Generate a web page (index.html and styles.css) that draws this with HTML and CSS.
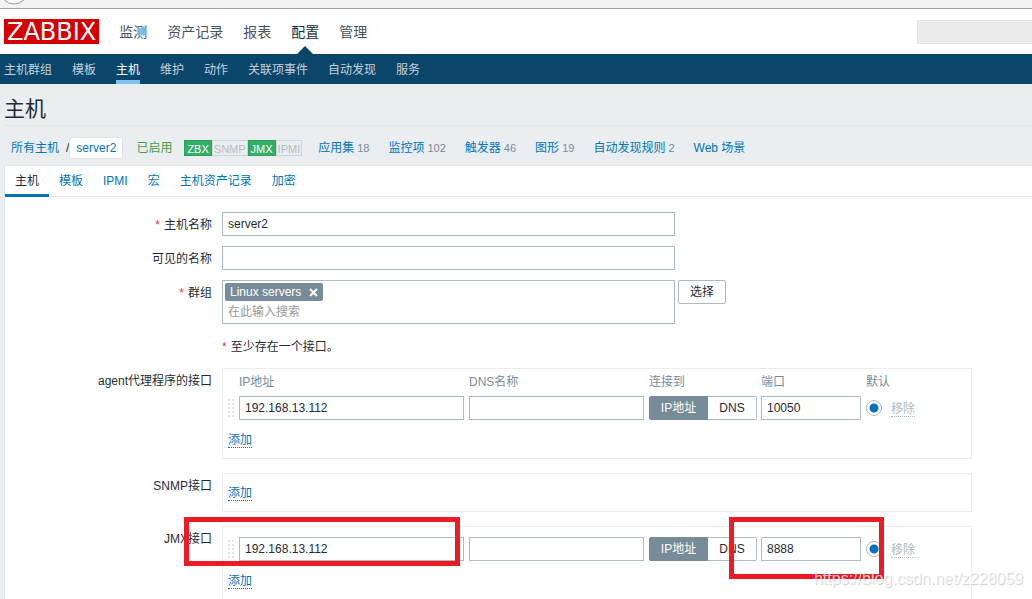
FILE: index.html
```html
<!DOCTYPE html>
<html lang="zh-CN">
<head>
<meta charset="utf-8">
<title>主机</title>
<link rel="stylesheet" href="styles.css">
</head>
<body>
<div class="browser-strip">
  <svg class="browser-back" width="30" height="5" viewBox="0 0 30 5" aria-hidden="true"><circle cx="14" cy="-10" r="14" fill="#fbfbfb" stroke="#999" stroke-width="1"/></svg>
</div>
<header class="header">
  <a class="logo" href="#">ZABBIX</a>
  <nav class="menu">
    <a href="#">监测</a>
    <a href="#">资产记录</a>
    <a href="#">报表</a>
    <a class="current" href="#">配置</a>
    <a href="#">管理</a>
  </nav>
  <input class="search" type="text" aria-label="搜索">
</header>
<nav class="submenu">
  <a href="#">主机群组</a>
  <a href="#">模板</a>
  <a class="current" href="#">主机</a>
  <a href="#">维护</a>
  <a href="#">动作</a>
  <a href="#">关联项事件</a>
  <a href="#">自动发现</a>
  <a href="#">服务</a>
</nav>
<main class="main">
  <h1 class="title">主机</h1>
  <div class="crumbs">
    <a href="#">所有主机</a>
    <span class="slash">/</span>
    <a class="host" href="#">server2</a>
    <span class="enabled">已启用</span>
    <span class="status"><span class="on">ZBX</span><span>SNMP</span><span class="on">JMX</span><span>IPMI</span></span>
    <span class="links">
      <span><a href="#">应用集</a><sub>18</sub></span>
      <span><a href="#">监控项</a><sub>102</sub></span>
      <span><a href="#">触发器</a><sub>46</sub></span>
      <span><a href="#">图形</a><sub>19</sub></span>
      <span><a href="#">自动发现规则</a><sub>2</sub></span>
      <a href="#">Web 场景</a>
    </span>
  </div>
  <section class="panel">
    <nav class="tabs">
      <a class="current" href="#">主机</a>
      <a href="#">模板</a>
      <a href="#">IPMI</a>
      <a href="#">宏</a>
      <a href="#">主机资产记录</a>
      <a href="#">加密</a>
    </nav>
    <form class="form">
      <div class="row">
        <label class="label required" for="host">主机名称</label>
        <input class="text wide" id="host" type="text" value="server2">
      </div>
      <div class="row">
        <label class="label" for="visible">可见的名称</label>
        <input class="text wide" id="visible" type="text">
      </div>
      <div class="row">
        <label class="label required" for="groups">群组</label>
        <div class="groups">
          <div class="multiselect wide">
            <span class="tag">Linux servers<button type="button" aria-label="删除"><svg width="9" height="9" viewBox="0 0 9 9"><path d="M1 1l7 7M8 1l-7 7" stroke="#fff" stroke-width="2"/></svg></button></span>
            <input id="groups" type="text" placeholder="在此输入搜索">
          </div>
          <button class="select" type="button">选择</button>
        </div>
      </div>
      <div class="row">
        <span></span>
        <span class="note required">至少存在一个接口。</span>
      </div>
      <div class="row">
        <span class="label">agent代理程序的接口</span>
        <div class="box">
          <table class="ifaces">
            <thead>
              <tr><th class="c-drag"></th><th class="c-ip">IP地址</th><th class="c-dns">DNS名称</th><th class="c-conn">连接到</th><th class="c-port">端口</th><th class="c-def">默认</th><th></th></tr>
            </thead>
            <tbody>
              <tr>
                <td><span class="drag"></span></td>
                <td><input class="text" type="text" aria-label="IP地址" value="192.168.13.112"></td>
                <td><input class="text" type="text" aria-label="DNS名称"></td>
                <td><span class="segment"><label><input type="radio" name="a-conn" checked><span class="first">IP地址</span></label><label><input type="radio" name="a-conn"><span class="second">DNS</span></label></span></td>
                <td><input class="text" type="text" aria-label="端口" value="10050"></td>
                <td><input class="radio" type="radio" name="a-def" aria-label="默认" checked></td>
                <td><button class="link off" type="button" disabled>移除</button></td>
              </tr>
            </tbody>
          </table>
          <div class="add"><button class="link" type="button">添加</button></div>
        </div>
      </div>
      <div class="row">
        <span class="label">SNMP接口</span>
        <div class="box">
          <div class="add"><button class="link" type="button">添加</button></div>
        </div>
      </div>
      <div class="row last">
        <span class="label">JMX接口</span>
        <div class="box">
          <table class="ifaces">
            <tbody>
              <tr>
                <td class="c-drag"><span class="drag"></span></td>
                <td class="c-ip"><input class="text" type="text" aria-label="IP地址" value="192.168.13.112"></td>
                <td class="c-dns"><input class="text" type="text" aria-label="DNS名称"></td>
                <td class="c-conn"><span class="segment"><label><input type="radio" name="j-conn" checked><span class="first">IP地址</span></label><label><input type="radio" name="j-conn"><span class="second">DNS</span></label></span></td>
                <td class="c-port"><input class="text" type="text" aria-label="端口" value="8888"></td>
                <td class="c-def"><input class="radio" type="radio" name="j-def" aria-label="默认" checked></td>
                <td><button class="link off" type="button" disabled>移除</button></td>
              </tr>
            </tbody>
          </table>
          <div class="add"><button class="link" type="button">添加</button></div>
          <span class="mark mark-ip"></span>
          <span class="mark mark-port"></span>
        </div>
      </div>
    </form>
  </section>
</main>
<div class="watermark">https://blog.csdn.net/z228059</div>
</body>
</html>
```
FILE: styles.css
```css
* {
  box-sizing: border-box;
}

body {
  margin: 0;
  min-height: 100vh;
  display: flex;
  flex-direction: column;
  position: relative;
  background: #ebeef0;
  color: #1f2c33;
  font: 12px/18px "Liberation Sans", "Noto Sans CJK SC", sans-serif;
}

a {
  color: #0275b8;
  text-decoration: none;
}

input,
button {
  font: inherit;
  color: inherit;
}

.browser-strip {
  height: 9px;
  background: #f3f3f3;
  border-bottom: 1px solid #a0a0a0;
}

.browser-back {
  display: block;
}

.header {
  display: flex;
  align-items: center;
  height: 45px;
  padding-left: 4px;
  background: #fff;
}

.logo {
  height: 25px;
  padding: 0 3px;
  background: #d40000;
  color: #fff;
  font: 24px/27px "DejaVu Sans", sans-serif;
}

.menu {
  display: flex;
  align-self: stretch;
  gap: 20px;
  margin-left: 20px;
  font-size: 14px;
  line-height: 47px;
}

.menu a {
  position: relative;
  height: 45px;
  color: #48545b;
}

.menu .current {
  color: #1f2c33;
}

.menu .current::after {
  content: "";
  position: absolute;
  left: 50%;
  bottom: 0;
  margin-left: -8px;
  border: 8px solid transparent;
  border-top: 0;
  border-bottom-color: #0a466a;
}

.search {
  width: 115px;
  height: 24px;
  margin-left: auto;
  background: #ececec;
  border: 1px solid #e3e3e3;
  border-right: 0;
}

.submenu {
  display: flex;
  gap: 20px;
  padding: 0 4px;
  height: 30px;
  background: #0a466a;
  line-height: 32px;
}

.submenu a {
  height: 30px;
  color: #c3d2dc;
}

.submenu .current {
  color: #fff;
  border-bottom: 4px solid #7fc3ee;
}

.main {
  flex: 1;
  display: flex;
  flex-direction: column;
  padding-left: 4px;
}

.title {
  margin: 0;
  padding: 9px 0 0;
  border-bottom: 1px solid #dfe4e7;
  font-size: 21px;
  line-height: 32px;
  font-weight: 400;
}

.crumbs {
  display: flex;
  align-items: center;
  padding: 11px 7px 6px;
  white-space: nowrap;
}

.slash {
  margin-left: 7px;
}

.host {
  padding: 0 6px;
  border: 1px solid #dfe4e7;
  border-radius: 2px;
  background: #fff;
  line-height: 20px;
}

.enabled {
  margin-left: 13px;
  color: #429e47;
}

.status {
  display: flex;
  margin-left: 12px;
  font-size: 11px;
}

.status span {
  padding: 0 1px;
  border: 1px solid #ced4d7;
  color: #b4bcc0;
  line-height: 16px;
  height: 16px;
}

.status .on {
  padding: 0 2px;
  border-color: #2f9f5e;
  background: #34af67;
  color: #fff;
}

.links {
  display: flex;
  gap: 19px;
  margin-left: 16px;
}

.links sub {
  margin-left: 3px;
  color: #768d99;
  font-size: 11px;
  vertical-align: baseline;
}

.panel {
  flex: 1;
  display: flex;
  flex-direction: column;
  background: #fff;
  border: 1px solid #dfe4e7;
  border-width: 1px 0 0 1px;
}

.tabs {
  display: flex;
  height: 31px;
  border-bottom: 1px solid #ebeef0;
  line-height: 31px;
}

.tabs a {
  padding: 0 10px;
  height: 31px;
}

.tabs .current {
  color: #1f2c33;
  border-bottom: 3px solid #0275b8;
}

.form {
  flex: 1;
  display: flex;
  flex-direction: column;
  gap: 10px;
  padding-top: 15px;
}

.row {
  display: grid;
  grid-template-columns: 207px minmax(0, 1fr);
  column-gap: 10px;
}

.last {
  flex: 1;
}

.label {
  text-align: right;
}

.label,
.note {
  height: 24px;
  line-height: 26px;
}

.required::before {
  content: "*";
  margin-right: 4px;
  color: #e33734;
}

.text {
  display: block;
  width: 100%;
  height: 24px;
  padding: 0 5px;
  border: 1px solid #acbbc2;
  background: #fff;
}

.wide {
  width: 100%;
  max-width: 453px;
}

.groups {
  display: flex;
  align-items: flex-start;
  gap: 3px;
}

.multiselect {
  padding: 2px;
  border: 1px solid #acbbc2;
}

.multiselect input {
  display: block;
  width: 100%;
  height: 18px;
  margin-top: 2px;
  padding: 0 3px;
  border: 0;
}

.multiselect input::placeholder {
  color: #999;
}

.tag {
  display: flex;
  align-items: center;
  gap: 8px;
  width: max-content;
  height: 18px;
  padding: 0 5px;
  border-radius: 2px;
  background: #768d99;
  color: #fff;
}

.tag button {
  display: flex;
  padding: 0;
  border: 0;
  background: none;
}

.select {
  width: 48px;
  height: 24px;
  padding: 0;
  border: 1px solid #acbbc2;
  border-radius: 2px;
  background: #fff;
}

.box {
  position: relative;
  width: 100%;
  max-width: 750px;
  min-height: 39px;
  margin-bottom: 4px;
  padding: 5px 5px 10px;
  border: 1px solid #ebeef0;
}

.last .box {
  margin-bottom: 0;
  border-bottom: 0;
}

.ifaces {
  border-collapse: collapse;
  table-layout: fixed;
  width: 100%;
}

.ifaces th {
  padding: 0;
  color: #768d99;
  font-weight: 400;
  line-height: 17px;
  text-align: left;
}

.ifaces td {
  padding: 5px 5px 6px 0;
}

.ifaces .c-drag {
  width: 11px;
}

.ifaces .c-ip {
  width: 230px;
}

.ifaces .c-dns {
  width: 180px;
}

.ifaces .c-conn {
  width: 112px;
}

.ifaces .c-port {
  width: 105px;
}

.ifaces .c-def {
  width: 25px;
}

.drag {
  display: block;
  width: 6px;
  height: 18px;
  background: conic-gradient(from 0deg at 2px 2px, transparent 75%, #dfe4e7 0) 0 0 / 4px 4px;
}

.segment {
  display: flex;
  width: 108px;
}

.segment input {
  position: absolute;
  opacity: 0;
}

.segment span {
  display: block;
  height: 24px;
  border: 1px solid #acbbc2;
  line-height: 22px;
  text-align: center;
}

.segment .first {
  width: 59px;
  border-radius: 2px 0 0 2px;
}

.segment .second {
  width: 49px;
  border-left: 0;
  border-radius: 0 2px 2px 0;
}

.segment input:checked + span {
  border-color: #768d99;
  background: #768d99;
  color: #fff;
}

.radio {
  display: block;
  appearance: none;
  width: 16px;
  height: 16px;
  margin: 0;
  border: 1px solid #acbbc2;
  border-radius: 50%;
  background: #fff;
}

.radio:checked {
  background: radial-gradient(circle, #0275b8 0 4px, #fff 5px);
}

.link {
  display: block;
  padding: 3px 0 0;
  border: 0;
  border-bottom: 1px dotted #0275b8;
  background: none;
  color: #0275b8;
  line-height: 14px;
}

.link.off {
  border-color: #acbbc2;
  color: #acbbc2;
}

.add {
  padding-top: 4px;
}

.mark {
  position: absolute;
  top: -10px;
  border: 5px solid #ed1c24;
  pointer-events: none;
}

.mark-ip {
  left: -39px;
  width: 276px;
  height: 49px;
}

.mark-port {
  left: 506px;
  width: 155px;
  height: 62px;
}

.watermark {
  position: absolute;
  right: 9px;
  bottom: 11px;
  color: rgba(255, 255, 255, 0.8);
  font-size: 16px;
  text-shadow: 1px 1px 1px rgba(0, 0, 0, 0.2);
}
```
